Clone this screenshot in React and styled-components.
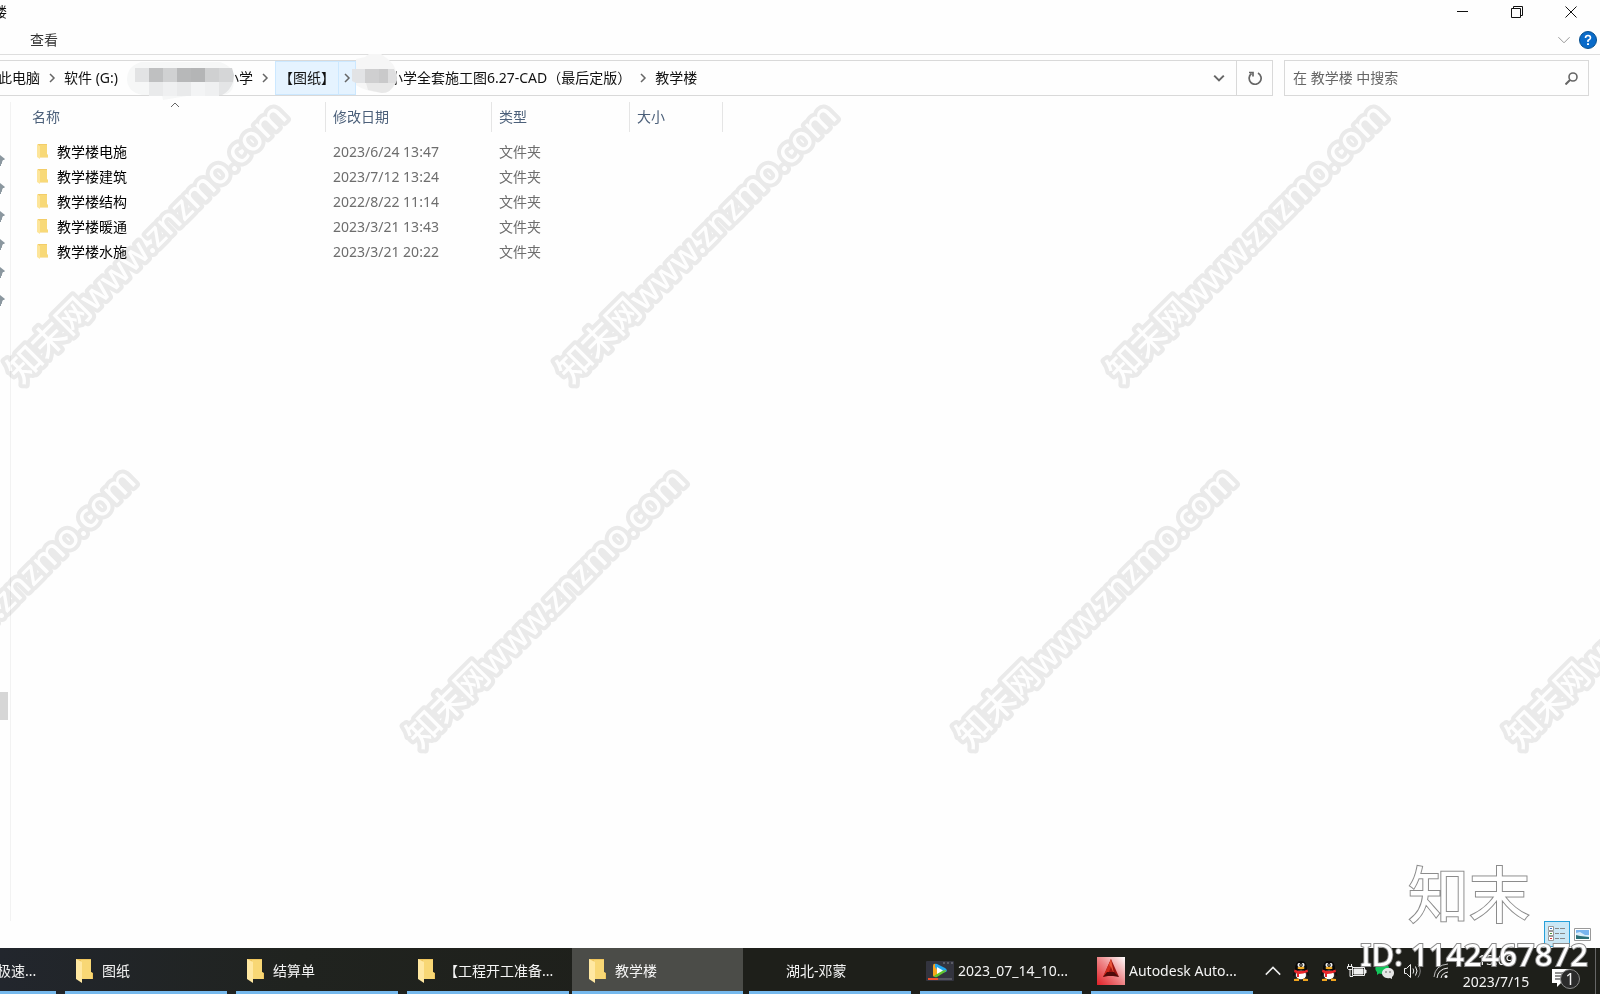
import React from "react";
import styled, { createGlobalStyle, css } from "styled-components";

const sans = `"Noto Sans", "Noto Sans CJK SC", sans-serif`;

const GlobalStyle = createGlobalStyle`
  *, *::before, *::after { box-sizing: border-box; }
  html, body { margin: 0; padding: 0; }
  body {
    background: #fefefe;
    color: #111;
    font-family: ${sans};
    font-size: 14px;
    line-height: 20px;
    overflow: hidden;
  }
  button {
    margin: 0; padding: 0; border: 0; background: none;
    font: inherit; color: inherit; white-space: nowrap;
  }
  svg { display: block; flex: none; }
`;

const Screen = styled.div`
  position: relative;
  display: flex;
  flex-direction: column;
  height: 100vh;
  overflow: hidden;
`;

const TitleBar = styled.header`
  display: flex;
  justify-content: space-between;
  height: 26px;
`;

const Title = styled.span`
  margin: 2px 0 0 -7px;
`;

const WindowButtons = styled.div`
  display: flex;
  padding-right: 2px;
`;

const WindowButton = styled.button`
  width: 54px;
  height: 24px;
  display: grid;
  place-items: center;
`;

const Ribbon = styled.div`
  display: flex;
  align-items: center;
  height: 29px;
  padding: 0 2px 1px 30px;
  border-bottom: 1px solid #dedede;
`;

const RibbonTab = styled.button`
  margin-right: auto;
  color: #333;
`;

const IconButton = styled.button`
  width: ${(p) => p.$width}px;
  align-self: stretch;
  display: grid;
  place-items: center;
  ${(p) => p.$divided && css`border-left: 1px solid #d9d9d9;`}
`;

const AddressRow = styled.div`
  display: flex;
  gap: 11px;
  padding: 5px 11px 0 0;
`;

const AddressBar = styled.nav`
  flex: 1;
  display: flex;
  align-items: center;
  height: 36px;
  border: 1px solid #d9d9d9;
  border-left: 0;
`;

const Crumbs = styled.div`
  flex: 1;
  align-self: stretch;
  display: flex;
  align-items: center;
  margin-left: -2px;
`;

const Crumb = styled.button`
  flex: none;
  align-self: stretch;
`;

const CrumbArrow = styled.button`
  flex: none;
  width: 24px;
  align-self: stretch;
  display: grid;
  place-items: center;
`;

const HotCrumb = styled.div`
  align-self: stretch;
  display: flex;
  margin-left: -2px;
  background: #e5f3ff;
  border: 1px solid #cce8ff;

  ${Crumb} { padding: 0 3px; }
  ${CrumbArrow} { width: 17px; border-left: 1px solid #cce8ff; }
`;

const MaskedCrumb = styled.div`
  flex: none;
  align-self: stretch;
  display: flex;
  align-items: center;

  svg {
    position: relative;
    z-index: 1;
    margin: 0 -9px 0 ${(p) => p.$lead}px;
  }
`;

const SearchForm = styled.form`
  width: 305px;
  height: 36px;
  display: flex;
  align-items: center;
  border: 1px solid #d9d9d9;
`;

const SearchInput = styled.input`
  flex: 1;
  min-width: 0;
  padding: 0 0 0 8px;
  border: 0;
  outline: 0;
  background: none;
  font: inherit;
  color: #666;
  &::placeholder { color: #666; opacity: 1; }
`;

const Body = styled.div`
  flex: 1;
  display: flex;
  min-height: 0;
  padding-top: 6px;
`;

const NavPane = styled.aside`
  flex: none;
  width: 11px;
  display: flex;
  flex-direction: column;
  border-right: 1px solid #f2f2f2;
`;

const PinList = styled.ul`
  list-style: none;
  margin: 0;
  padding: 44px 0 0;
`;

const Pin = styled.li`
  height: 28px;
  display: flex;
  align-items: center;
`;

const ScrollThumb = styled.div`
  width: 8px;
  height: 28px;
  margin-top: 378px;
  background: #d6d6d6;
`;

const FilePane = styled.main`
  flex: 1;
  min-width: 0;
`;

const FileTable = styled.table`
  width: 100%;
  table-layout: fixed;
  border-collapse: collapse;
`;

const Column = styled.col`
  width: ${(p) => (p.$width ? `${p.$width}px` : "auto")};
`;

const HeadCell = styled.th`
  position: relative;
  padding: 0 0 7px;
  font-weight: 400;
  text-align: left;
  color: #4c607a;
`;

const HeadLabel = styled.div`
  height: 30px;
  line-height: 30px;
  padding-left: ${(p) => (p.$first ? 21 : 7)}px;
  border-right: 1px solid #e5e5e5;
`;

const SortMark = styled.span`
  position: absolute;
  top: -2px;
  left: 0;
  right: 0;
  display: grid;
  justify-items: center;
  padding-left: 12px;
`;

const Cell = styled.td`
  height: 25px;
  padding: 0 0 0 7px;
  color: #6d6d6d;
  white-space: nowrap;
`;

const NameCell = styled(Cell)`
  padding-left: 26px;
  color: #000;
`;

const FileName = styled.div`
  display: flex;
  align-items: center;
  gap: 9px;
`;

const ViewBar = styled.div`
  display: flex;
  justify-content: flex-end;
  align-items: center;
  height: 27px;
  padding: 0 9px 1px 0;
  gap: 4px;
`;

const ViewButton = styled.button`
  display: grid;
  place-items: center;
  height: 26px;
  ${(p) => p.$active && css`
    width: 26px;
    background: #cbe8f6;
    border: 1px solid #26a0da;
  `}
`;

const Taskbar = styled.footer`
  display: flex;
  height: 46px;
  overflow: hidden;
  background: linear-gradient(90deg, #22262d 0, #20231f 300px, #1e1f1a 700px);
  color: #f4f4f4;
`;

const Tasks = styled.div`
  flex: 1;
  display: flex;
  min-width: 0;
  margin-left: -112px;
`;

const Task = styled.button`
  position: relative;
  flex: none;
  width: 171px;
  display: flex;
  align-items: center;
  padding: 0 8px 0 ${(p) => p.$indent}px;
  gap: ${(p) => p.$gap}px;
  background: ${(p) => (p.$active ? "#4b4c48" : "none")};

  &::after {
    content: "";
    position: absolute;
    bottom: 0;
    left: ${(p) => (p.$active ? 0 : 6)}px;
    right: ${(p) => (p.$active ? 0 : 3)}px;
    height: 3px;
    background: #76b9ed;
  }
`;

const Tray = styled.div`
  flex: none;
  display: flex;
  align-items: center;
`;

const TrayButton = styled.button`
  width: 28px;
  height: 46px;
  display: grid;
  place-items: center;
`;

const Clock = styled.button`
  width: 82px;
  height: 46px;
  line-height: 22px;
  text-align: center;
`;

const NoticeButton = styled.button`
  position: relative;
  width: 59px;
  height: 46px;
  padding: 14px 0 0 15px;
  border-right: 1px solid #666;
  margin-right: 4px;
`;

const Badge = styled.span`
  position: absolute;
  left: 23px;
  top: 21px;
  width: 20px;
  height: 20px;
  border: 1px solid #8a8a8a;
  border-radius: 50%;
  background: #2b2b2b;
  font-size: 16px;
  line-height: 18px;
  text-align: center;
`;

const WatermarkLayer = styled.svg`
  position: absolute;
  inset: 0;
  width: 100%;
  height: 100%;
  pointer-events: none;
  mix-blend-mode: multiply;
  font-size: 34px;
  font-weight: 500;
  text-anchor: middle;
  fill: #fff;
  stroke: #ebebeb;
  stroke-width: 8px;
  stroke-linejoin: round;
  paint-order: stroke;
`;

const Stamp = styled.div`
  position: absolute;
  right: 12px;
  bottom: 20px;
  display: flex;
  flex-direction: column;
  align-items: flex-end;
  gap: 6px;
  color: #fff;
  pointer-events: none;
  paint-order: stroke fill;
  -webkit-text-stroke: 2px #8c8c8c;
`;

const StampLogo = styled.span`
  margin-right: 58px;
  font-size: 61px;
  line-height: 66px;
  font-weight: 400;
`;

const StampId = styled.span`
  font-size: 31px;
  line-height: 40px;
  font-weight: 500;
`;

const Chevron = ({ dir = "right", size = 10, color = "#666", weight = 1.5 }) => {
  const d = {
    right: "M3 1l4 4-4 4",
    down: "M1 3l4 4 4-4",
    up: "M1 7l4-4 4 4",
  }[dir];
  return (
    <svg width={size} height={size} viewBox="0 0 10 10" fill="none" stroke={color} strokeWidth={(weight * 10) / size}>
      <path d={d} />
    </svg>
  );
};

const SmallFolder = () => (
  <svg width="11" height="15" viewBox="0 0 11 15">
    <path d="M1 0h9v10l1 1v2.500H3L1 12z" fill="#f3cd68" />
    <path d="M3 1h7v10h1v2H3z" fill="#f8d978" />
    <path d="M0 0l3 2v13l-3-2z" fill="#fde59a" />
  </svg>
);

const BigFolder = () => (
  <svg width="17" height="24" viewBox="0 0 17 24">
    <path d="M0 0h15v13l2 1v6H4L0 18z" fill="#efc55d" />
    <path d="M5 1h10v12l1 1v6H5z" fill="#f8d775" />
    <path d="M0 0l6 3v21l-6-4z" fill="#ffe8a2" />
  </svg>
);

const PlayerIcon = () => (
  <svg width="28" height="20" viewBox="0 0 28 20">
    <rect width="28" height="20" rx="1" fill="#33343f" />
    <path d="M17 1h2v2h-2zM21 1h2v2h-2zM25 1h2v2h-2z" fill="#5b5c66" />
    <path d="M10 3q-3-1-3 2v9q0 3 3 1l4-4V6z" fill="#f7a51d" />
    <path d="M9 3q1-.5 2 0l8 4q3 2 1 4l-6 1-5-6z" fill="#24a7ee" />
    <path d="M8 15l7-5 5-1q.5 1-1 2l-8 5q-2 1-3-1z" fill="#62c52d" />
    <path d="M11 6l6 3.500-6 3.500z" fill="#fff" />
    <path d="M2 17h24v2H2z" fill="#565762" />
    <path d="M2 17h10v2H2z" fill="#f2502d" />
  </svg>
);

const AutocadIcon = () => (
  <svg width="28" height="28" viewBox="0 0 28 28">
    <defs>
      <linearGradient id="acad" x1="0" y1="1" x2="1" y2="0">
        <stop offset="0" stopColor="#e01f26" />
        <stop offset=".5" stopColor="#ee8587" />
        <stop offset="1" stopColor="#fff" />
      </linearGradient>
    </defs>
    <rect width="28" height="28" fill="url(#acad)" />
    <path d="M14 2l8 18-6-3h-5l-5 3z" fill="#9d1612" />
    <path d="M14 2l-8 18 5-3 3-7z" fill="#cf2c1d" />
    <path d="M14 2l3 15-3-7-2-2z" fill="#e8563a" />
    <path d="M10 15h7l5 5-6-1h-5l-5 1z" fill="#4e0b0a" />
  </svg>
);

const PenguinIcon = () => (
  <svg width="18" height="20" viewBox="0 0 18 20">
    <path d="M3 8L1 13q-.5 2 .5 2l2-2h11l2 2q1 0 .5-2L15 8z" fill="#111" />
    <path d="M3 8q0-8 6-8t6 8v3H3z" fill="#080808" />
    <ellipse cx="9" cy="14" rx="5.500" ry="4.800" fill="#fff" stroke="#111" strokeWidth=".8" />
    <ellipse cx="7" cy="4" rx="1.500" ry="2" fill="#fff" />
    <ellipse cx="11" cy="4" rx="1.500" ry="2" fill="#fff" />
    <circle cx="7.500" cy="4" r=".7" fill="#111" />
    <circle cx="10.500" cy="4" r=".7" fill="#111" />
    <ellipse cx="9" cy="7" rx="3.500" ry="1.200" fill="#f5ad25" />
    <path d="M2.500 8.500q6.500 3 13 0l.5 2.500q-5 2-9 2v3H5v-3.500l-3-1.500z" fill="#e8262b" />
    <path d="M2 18l5-.5V20H2zM11 17.500l5 .5v2h-5z" fill="#f2a51f" />
  </svg>
);

const BatteryIcon = () => (
  <svg width="20" height="14" viewBox="0 0 20 14" fill="none" stroke="#eee">
    <path d="M5.500 3.500h12v8h-12z" />
    <path d="M7 5h9v5H7z" fill="#eee" />
    <path d="M18 6h1v3h-1z" fill="#eee" />
    <path d="M1.500 0v2M4.500 0v2M.500 2.500h5v2l-1 1h-3l-1-1zM3 6v6.500h3" />
  </svg>
);

const ChatIcon = () => (
  <svg width="20" height="18" viewBox="0 0 20 18">
    <path d="M7 1c4 0 7 2 7 5s-3 6-7 6l-3-.500L2 13V10C-2 6 2 1 7 1z" fill="#14c45b" />
    <path d="M13 6c4 0 6 2 6 5 0 2-1 3-2 4v2l-2-1c-5 1-8-2-8-5s3-5 6-5z" fill="#e6e6e6" />
    <circle cx="11" cy="10" r=".8" fill="#555" />
    <circle cx="15" cy="10" r=".8" fill="#555" />
  </svg>
);

const SoundIcon = () => (
  <svg width="20" height="16" viewBox="0 0 20 16" fill="none" stroke="#eee">
    <path d="M1.500 5.500h2l4-4v13l-4-4h-2z" />
    <path d="M10 5.500q1.500 2.500 0 5M12.500 3.500q3 4.500 0 9" />
    <path d="M15 1.500q4.500 6.500 0 13" stroke="#888" />
  </svg>
);

const WifiIcon = () => (
  <svg width="16" height="16" viewBox="0 0 16 16" fill="none" stroke="#eee">
    <path d="M1 14Q2 2 15 1" stroke="#bbb" />
    <path d="M4 15Q5 6 15 5" />
    <path d="M8 15Q9 10 15 9" />
    <circle cx="13" cy="13.500" r="1.500" fill="#eee" stroke="none" />
  </svg>
);

const NoticeIcon = () => (
  <svg width="19" height="18" viewBox="0 0 19 18">
    <path d="M0 0h19v14H9l-4 4v-4H0z" fill="#fff" />
    <path d="M3 4h13M3 7h13M3 10h9" stroke="#222" />
  </svg>
);

const DetailsIcon = () => (
  <svg width="18" height="16" viewBox="0 0 18 16" fill="none">
    <path d="M.500 .500h5v4h-5zM.500 5.500h5v4h-5zM.500 10.500h5v4h-5z" fill="#fff" stroke="#999" />
    <path d="M2 2h2v1H2z" fill="#3c78c8" />
    <path d="M2 7h2v1H2z" fill="#4a9a3a" />
    <path d="M2 12h2v1H2z" fill="#d33" />
    <path d="M7 2.500h4M12 2.500h5M7 7.500h4M12 7.500h5M7 12.500h4M12 12.500h5" stroke="#888" />
  </svg>
);

const ThumbIcon = () => (
  <svg width="17" height="13" viewBox="0 0 17 13">
    <path d="M.500 .500h16v12H.500z" fill="#fff" stroke="#999" />
    <path d="M2 2h13v9H2z" fill="#79b4ee" />
    <path d="M2 5l4-1 5 3h4v2H2z" fill="#d8ecfa" />
    <path d="M2 7l4 1 9 1v2H2z" fill="#2b6f77" />
  </svg>
);

const PinIcon = () => (
  <svg width="5" height="11" viewBox="0 0 5 11">
    <path d="M0 0l5 4-1 1H3L2 7v2L0 8zM0 8h1v3H0z" fill="#8b979f" />
  </svg>
);

const LongMask = () => (
  <svg width="107" height="34" viewBox="0 0 107 34" overflow="visible">
    <path d="M14 1h79q14 4 14 18T95 34H66l-30 5-1-5H15Q1 31 0 19 0 5 14 1z" fill="#f6f7f7" />
    <path d="M8 7h14v14H8z" fill="#e2e3e4" />
    <path d="M22 7h14v14H22z" fill="#bfc0c1" />
    <path d="M36 7h14v14H36z" fill="#d0d1d2" />
    <path d="M50 7h14v14H50z" fill="#b7b8b9" />
    <path d="M64 7h14v14H64z" fill="#b4b5b6" />
    <path d="M78 7h14v14H78z" fill="#cfd0d1" />
    <path d="M92 7h13l2 7-1 7H92z" fill="#d5d6d7" />
    <path d="M22 21h14v14H22zM50 21h14v14H50z" fill="#e9eaeb" />
    <path d="M36 21h14v14H36zM78 21h14v14H78z" fill="#eff0f1" />
    <path d="M64 21h14v14H64z" fill="#f3f4f5" />
    <path d="M92 21h14q-3 9-11 13h-3z" fill="#e4e5e6" />
  </svg>
);

const ShortMask = () => (
  <svg width="47" height="34" viewBox="0 0 47 34" overflow="visible">
    <path d="M5 2V-2L14-4L18-7H30L34-4Q44 2 46 14 45 31 31 32 13 30 5 24z" fill="#f6f6f6" />
    <path d="M1 8h13v14H5L1 20z" fill="#e2e3e5" />
    <path d="M14 8h14v14H14z" fill="#cfcfd0" />
    <path d="M28 8h9v14h-9z" fill="#c9c9ca" />
    <path d="M37 8h6q3 5 3 11l-1 3h-8z" fill="#dededf" />
    <path d="M15 22h29q-4 10-13 10l-14-3z" fill="#e8e8e8" />
  </svg>
);

const files = [
  ["教学楼电施", "2023/6/24 13:47"],
  ["教学楼建筑", "2023/7/12 13:24"],
  ["教学楼结构", "2022/8/22 11:14"],
  ["教学楼暖通", "2023/3/21 13:43"],
  ["教学楼水施", "2023/3/21 20:22"],
];

const tasks = [
  { label: "极速...", indent: 109 },
  { label: "图纸", icon: <BigFolder />, indent: 17, gap: 9 },
  { label: "结算单", icon: <BigFolder />, indent: 17, gap: 9 },
  { label: "【工程开工准备...", icon: <BigFolder />, indent: 17, gap: 9 },
  { label: "教学楼", icon: <BigFolder />, indent: 17, gap: 9, active: true },
  { label: "湖北-邓蒙", indent: 43 },
  { label: "2023_07_14_10...", icon: <PlayerIcon />, indent: 12, gap: 4 },
  { label: "Autodesk Auto...", icon: <AutocadIcon />, indent: 12, gap: 4 },
];

const watermarks = [
  [148, 244], [698, 244], [1248, 244],
  [-3, 609], [547, 609], [1097, 609], [1647, 609],
];

export default function App() {
  return (
    <Screen>
      <GlobalStyle />
      <TitleBar>
        <Title>楼</Title>
        <WindowButtons>
          <WindowButton aria-label="最小化">
            <svg width="12" height="12" viewBox="0 0 12 12"><path d="M0 5.500h11" stroke="#111" /></svg>
          </WindowButton>
          <WindowButton aria-label="还原">
            <svg width="12" height="12" viewBox="0 0 12 12" fill="none" stroke="#111">
              <path d="M.500 2.500h9v9h-9zM2.500 2.500v-2h9v9h-2" />
            </svg>
          </WindowButton>
          <WindowButton aria-label="关闭">
            <svg width="12" height="12" viewBox="0 0 12 12" stroke="#111">
              <path d="M.500 .500l11 11M11.500 .500l-11 11" />
            </svg>
          </WindowButton>
        </WindowButtons>
      </TitleBar>

      <Ribbon>
        <RibbonTab>查看</RibbonTab>
        <IconButton $width={28} aria-label="展开功能区">
          <Chevron dir="down" size={14} color="#999" weight={1} />
        </IconButton>
        <IconButton $width={20} aria-label="帮助">
          <svg width="18" height="18" viewBox="0 0 18 18">
            <circle cx="9" cy="9" r="8.500" fill="#0a6bc9" stroke="#07508f" />
            <path d="M6.500 7q0-2.500 2.500-2.500T11.500 7Q11.500 8 9 9.500V11" fill="none" stroke="#fff" strokeWidth="1.600" />
            <path d="M8 12.200h2v1.800H8z" fill="#fff" />
          </svg>
        </IconButton>
      </Ribbon>

      <AddressRow>
        <AddressBar>
          <Crumbs>
            <Crumb>此电脑</Crumb>
            <CrumbArrow aria-label="展开"><Chevron /></CrumbArrow>
            <Crumb>软件 (G:)</Crumb>
            <MaskedCrumb $lead={9}>
              <LongMask />
              <Crumb>小学</Crumb>
            </MaskedCrumb>
            <CrumbArrow aria-label="展开"><Chevron /></CrumbArrow>
            <HotCrumb>
              <Crumb>【图纸】</Crumb>
              <CrumbArrow aria-label="展开"><Chevron /></CrumbArrow>
            </HotCrumb>
            <MaskedCrumb $lead={-5}>
              <ShortMask />
              <Crumb>小学全套施工图6.27-CAD（最后定版）</Crumb>
            </MaskedCrumb>
            <CrumbArrow aria-label="展开"><Chevron /></CrumbArrow>
            <Crumb>教学楼</Crumb>
          </Crumbs>
          <IconButton $width={34} aria-label="历史记录"><Chevron dir="down" size={12} weight={2} /></IconButton>
          <IconButton $width={36} $divided aria-label="刷新">
            <svg width="14" height="14" viewBox="0 0 14 14" fill="none" stroke="#666" strokeWidth="1.700">
              <path d="M10 2a6 6 0 1 1-6.500 .5M1 1.500h4v4" />
            </svg>
          </IconButton>
        </AddressBar>
        <SearchForm onSubmit={(e) => e.preventDefault()}>
          <SearchInput type="text" aria-label="搜索" placeholder="在 教学楼 中搜索" />
          <IconButton $width={33} aria-label="搜索">
            <svg width="13" height="13" viewBox="0 0 13 13" fill="none" stroke="#666" strokeWidth="1.600">
              <circle cx="8" cy="5" r="4" />
              <path d="M5 8l-4.500 4.500" strokeWidth="2" />
            </svg>
          </IconButton>
        </SearchForm>
      </AddressRow>

      <Body>
        <NavPane>
          <PinList>
            {[1, 2, 3, 4, 5, 6].map((n) => <Pin key={n}><PinIcon /></Pin>)}
          </PinList>
          <ScrollThumb />
        </NavPane>
        <FilePane>
          <FileTable>
            <colgroup>
              <Column $width={315} />
              <Column $width={166} />
              <Column $width={138} />
              <Column $width={93} />
              <Column />
            </colgroup>
            <thead>
              <tr>
                <HeadCell>
                  <HeadLabel $first>名称</HeadLabel>
                  <SortMark><Chevron dir="up" weight={1} /></SortMark>
                </HeadCell>
                <HeadCell><HeadLabel>修改日期</HeadLabel></HeadCell>
                <HeadCell><HeadLabel>类型</HeadLabel></HeadCell>
                <HeadCell><HeadLabel>大小</HeadLabel></HeadCell>
                <td />
              </tr>
            </thead>
            <tbody>
              {files.map(([name, date]) => (
                <tr key={name}>
                  <NameCell><FileName><SmallFolder />{name}</FileName></NameCell>
                  <Cell>{date}</Cell>
                  <Cell>文件夹</Cell>
                  <Cell />
                  <td />
                </tr>
              ))}
            </tbody>
          </FileTable>
        </FilePane>
      </Body>

      <ViewBar>
        <ViewButton $active aria-label="详细信息"><DetailsIcon /></ViewButton>
        <ViewButton aria-label="大缩略图"><ThumbIcon /></ViewButton>
      </ViewBar>

      <Taskbar>
        <Tasks>
          {tasks.map((t) => (
            <Task key={t.label} $indent={t.indent} $gap={t.gap || 0} $active={t.active}>
              {t.icon}
              <span>{t.label}</span>
            </Task>
          ))}
        </Tasks>
        <Tray>
          <TrayButton aria-label="显示隐藏的图标"><Chevron dir="up" size={18} color="#eee" weight={1.5} /></TrayButton>
          <TrayButton aria-label="QQ"><PenguinIcon /></TrayButton>
          <TrayButton aria-label="QQ"><PenguinIcon /></TrayButton>
          <TrayButton aria-label="电池"><BatteryIcon /></TrayButton>
          <TrayButton aria-label="微信"><ChatIcon /></TrayButton>
          <TrayButton aria-label="音量"><SoundIcon /></TrayButton>
          <TrayButton aria-label="网络"><WifiIcon /></TrayButton>
          <Clock>15:09<br />2023/7/15</Clock>
          <NoticeButton aria-label="通知">
            <NoticeIcon />
            <Badge>1</Badge>
          </NoticeButton>
        </Tray>
      </Taskbar>

      <WatermarkLayer>
        {watermarks.map(([x, y]) => (
          <text key={`${x}-${y}`} transform={`translate(${x} ${y}) rotate(-45)`} y="10">
            知末网www.znzmo.com
          </text>
        ))}
      </WatermarkLayer>
      <Stamp>
        <StampLogo>知末</StampLogo>
        <StampId>ID: 1142467872</StampId>
      </Stamp>
    </Screen>
  );
}
